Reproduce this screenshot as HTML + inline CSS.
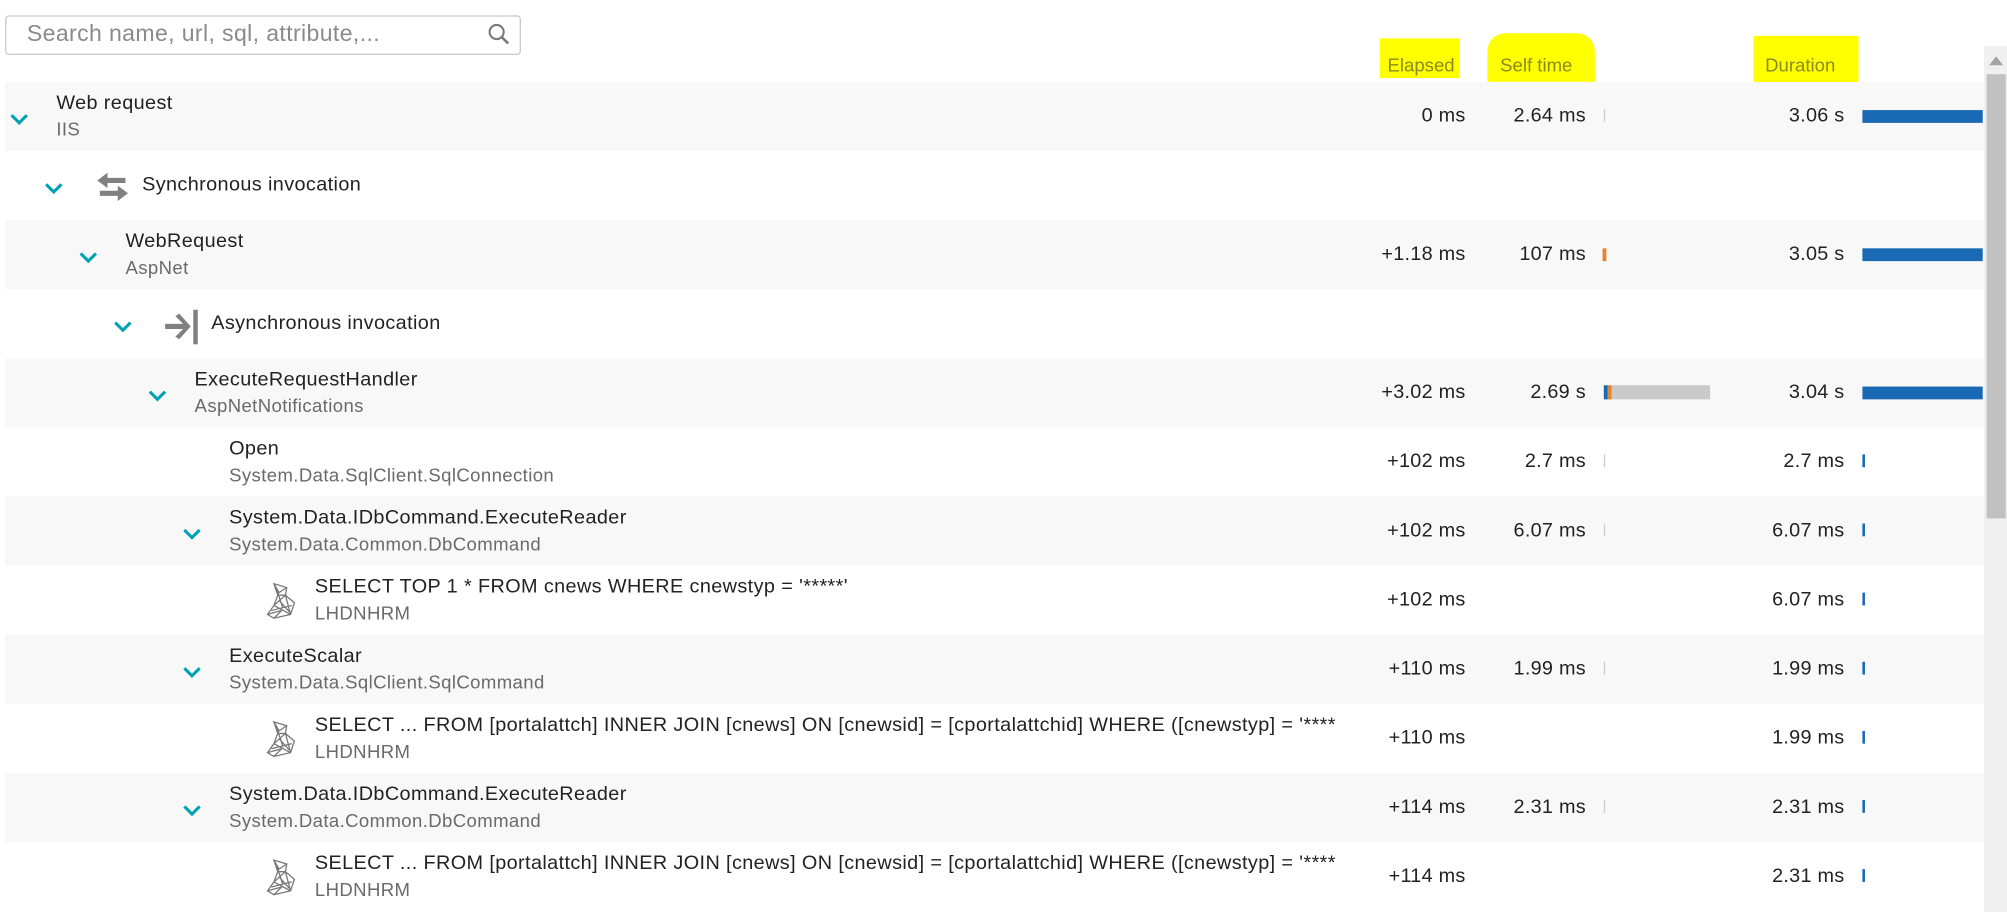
<!DOCTYPE html>
<html><head><meta charset="utf-8"><style>
html,body{margin:0;padding:0;background:#fff;overflow:hidden;}
body{width:2007px;height:912px;position:relative;font-family:"Liberation Sans",sans-serif;}
#w{position:absolute;left:0;top:0;width:1568px;height:713px;transform:scale(1.28);transform-origin:0 0;}
.a{position:absolute;white-space:nowrap;}
.row{position:absolute;left:4px;width:1546px;height:54px;}
.g{background:#f8f8f8;}
.t{position:absolute;white-space:nowrap;font-size:15.5px;color:#222;letter-spacing:0.3px;}
.s{position:absolute;white-space:nowrap;font-size:14.5px;color:#6a6a6a;letter-spacing:0.3px;}
.num{position:absolute;font-size:15.5px;color:#222;text-align:right;width:120px;letter-spacing:0.2px;}
.chev{position:absolute;width:16px;height:10px;}
.hl{position:absolute;background:#ffff00;}
.hd{position:absolute;font-size:14.5px;color:#8a8a20;}
</style></head><body><div id="w">
<div class="a" style="left:4px;top:12px;width:401px;height:29px;border:1px solid #c8c8c8;border-radius:3px;"></div>
<div class="a" style="left:21px;top:16px;font-size:18px;color:#8a8a8a;letter-spacing:0.3px">Search name, url, sql, attribute,...</div>
<svg class="a" style="left:380px;top:17px" width="20" height="20" viewBox="0 0 20 20"><circle cx="8" cy="8" r="5.5" fill="none" stroke="#777" stroke-width="1.6"/><line x1="12" y1="12" x2="17" y2="17" stroke="#777" stroke-width="2"/></svg>

<div class="hl" style="left:1078px;top:30px;width:62px;height:31px"></div>
<div class="hl" style="left:1162px;top:26px;width:84px;height:38px;border-radius:14px 14px 0 0"></div>
<div class="hl" style="left:1370px;top:28px;width:82px;height:42px"></div>
<div class="hd" style="left:1084px;top:44px">Elapsed</div>
<div class="hd" style="left:1172px;top:44px">Self time</div>
<div class="hd" style="left:1379px;top:44px">Duration</div>

<div class="a" style="left:1550px;top:36px;width:18px;height:677px;background:#f0f0f0"></div>
<div class="a" style="left:1552px;top:58px;width:15px;height:347px;background:#c1c1c1"></div>
<svg class="a" style="left:1552px;top:40px" width="15" height="14"><polygon points="2,11 7.5,4 13,11" fill="#a3a3a3"/></svg>

<div class="row g" style="top:64px"></div>
<div class="row g" style="top:172px"></div>
<div class="row g" style="top:280px"></div>
<div class="row g" style="top:388px"></div>
<div class="row g" style="top:496px"></div>
<div class="row g" style="top:604px"></div>

<svg width="0" height="0" style="position:absolute"><defs><symbol id="cv" viewBox="0 0 16 10"><polyline points="2,2 8,8 14,2" fill="none" stroke="#00a1b2" stroke-width="2.4"/></symbol>
<symbol id="db" viewBox="0 0 28 32"><g fill="none" stroke="#777" stroke-width="1"><path d="M8 3 L18 6 L17 12 L24 18 L21 27 L8 30 L3 27 L8 20 L11 12 Z"/><path d="M8 3 L12 10 L18 6 M11 12 L17 12 M8 20 L17 12 L21 27 M8 20 L21 27 M3 27 L14 24 L8 30 M10 7 L15 22 M6 24 L22 20 M12 16 L20 25"/></g></symbol></defs></svg>

<svg class="chev" style="left:7px;top:88px"><use href="#cv"/></svg>
<div class="t" style="left:44px;top:72px">Web request</div><div class="s" style="left:44px;top:94px">IIS</div>
<div class="num" style="left:1025px;top:82px">0 ms</div>
<div class="num" style="left:1119px;top:82px">2.64 ms</div>
<div class="a" style="left:1253px;top:85px;width:1px;height:10px;background:#ccc"></div>
<div class="num" style="left:1321px;top:82px">3.06 s</div>
<div class="a" style="left:1455px;top:86px;width:94px;height:10px;background:#1a69b5"></div>

<svg class="chev" style="left:34px;top:142px"><use href="#cv"/></svg>
<svg class="a" style="left:74px;top:134px" width="28" height="24" viewBox="0 0 28 24"><path d="M2 7 L10 1 L10 5 L24 5 L24 9 L10 9 L10 13 Z" fill="#808080"/><path d="M26 17 L18 11 L18 15 L4 15 L4 19 L18 19 L18 23 Z" fill="#808080"/></svg>
<div class="t" style="left:111px;top:136px">Synchronous invocation</div>

<svg class="chev" style="left:61px;top:196px"><use href="#cv"/></svg>
<div class="t" style="left:98px;top:180px">WebRequest</div><div class="s" style="left:98px;top:202px">AspNet</div>
<div class="num" style="left:1025px;top:190px">+1.18 ms</div>
<div class="num" style="left:1119px;top:190px">107 ms</div>
<div class="a" style="left:1252px;top:194px;width:3px;height:10px;background:#e6832e"></div>
<div class="num" style="left:1321px;top:190px">3.05 s</div>
<div class="a" style="left:1455px;top:194px;width:94px;height:10px;background:#1a69b5"></div>

<svg class="chev" style="left:88px;top:250px"><use href="#cv"/></svg>
<svg class="a" style="left:127px;top:240px" width="30" height="30" viewBox="0 0 30 30"><path d="M2 13 L16 13 L10 7 L13 5 L22 15 L13 25 L10 23 L16 17 L2 17 Z" fill="#808080"/><rect x="24" y="2" width="3.5" height="27" fill="#808080"/></svg>
<div class="t" style="left:165px;top:244px">Asynchronous invocation</div>

<svg class="chev" style="left:115px;top:304px"><use href="#cv"/></svg>
<div class="t" style="left:152px;top:288px">ExecuteRequestHandler</div><div class="s" style="left:152px;top:310px">AspNetNotifications</div>
<div class="num" style="left:1025px;top:298px">+3.02 ms</div>
<div class="num" style="left:1119px;top:298px">2.69 s</div>
<div class="a" style="left:1253px;top:301px;width:83px;height:11px;background:#cacaca"></div>
<div class="a" style="left:1253px;top:301px;width:3px;height:11px;background:#1a69b5"></div>
<div class="a" style="left:1256px;top:301px;width:3px;height:11px;background:#e6832e"></div>
<div class="num" style="left:1321px;top:298px">3.04 s</div>
<div class="a" style="left:1455px;top:302px;width:94px;height:10px;background:#1a69b5"></div>

<div class="t" style="left:179px;top:342px">Open</div><div class="s" style="left:179px;top:364px">System.Data.SqlClient.SqlConnection</div>
<div class="num" style="left:1025px;top:352px">+102 ms</div>
<div class="num" style="left:1119px;top:352px">2.7 ms</div>
<div class="a" style="left:1253px;top:355px;width:1px;height:10px;background:#ccc"></div>
<div class="num" style="left:1321px;top:352px">2.7 ms</div>
<div class="a" style="left:1455px;top:355px;width:2px;height:10px;background:#1a69b5"></div>

<svg class="chev" style="left:142px;top:412px"><use href="#cv"/></svg>
<div class="t" style="left:179px;top:396px">System.Data.IDbCommand.ExecuteReader</div><div class="s" style="left:179px;top:418px">System.Data.Common.DbCommand</div>
<div class="num" style="left:1025px;top:406px">+102 ms</div>
<div class="num" style="left:1119px;top:406px">6.07 ms</div>
<div class="a" style="left:1253px;top:409px;width:1px;height:10px;background:#ccc"></div>
<div class="num" style="left:1321px;top:406px">6.07 ms</div>
<div class="a" style="left:1455px;top:409px;width:2px;height:10px;background:#1a69b5"></div>

<svg class="a" style="left:206px;top:453px" width="28" height="32"><use href="#db"/></svg>
<div class="t" style="left:246px;top:450px">SELECT TOP 1 * FROM cnews WHERE cnewstyp = '*****'</div><div class="s" style="left:246px;top:472px">LHDNHRM</div>
<div class="num" style="left:1025px;top:460px">+102 ms</div>
<div class="num" style="left:1321px;top:460px">6.07 ms</div>
<div class="a" style="left:1455px;top:463px;width:2px;height:10px;background:#1a69b5"></div>

<svg class="chev" style="left:142px;top:520px"><use href="#cv"/></svg>
<div class="t" style="left:179px;top:504px">ExecuteScalar</div><div class="s" style="left:179px;top:526px">System.Data.SqlClient.SqlCommand</div>
<div class="num" style="left:1025px;top:514px">+110 ms</div>
<div class="num" style="left:1119px;top:514px">1.99 ms</div>
<div class="a" style="left:1253px;top:517px;width:1px;height:10px;background:#ccc"></div>
<div class="num" style="left:1321px;top:514px">1.99 ms</div>
<div class="a" style="left:1455px;top:517px;width:2px;height:10px;background:#1a69b5"></div>

<svg class="a" style="left:206px;top:561px" width="28" height="32"><use href="#db"/></svg>
<div class="t" style="left:246px;top:558px">SELECT ... FROM [portalattch] INNER JOIN [cnews] ON [cnewsid] = [cportalattchid] WHERE ([cnewstyp] = '****</div><div class="s" style="left:246px;top:580px">LHDNHRM</div>
<div class="num" style="left:1025px;top:568px">+110 ms</div>
<div class="num" style="left:1321px;top:568px">1.99 ms</div>
<div class="a" style="left:1455px;top:571px;width:2px;height:10px;background:#1a69b5"></div>

<svg class="chev" style="left:142px;top:628px"><use href="#cv"/></svg>
<div class="t" style="left:179px;top:612px">System.Data.IDbCommand.ExecuteReader</div><div class="s" style="left:179px;top:634px">System.Data.Common.DbCommand</div>
<div class="num" style="left:1025px;top:622px">+114 ms</div>
<div class="num" style="left:1119px;top:622px">2.31 ms</div>
<div class="a" style="left:1253px;top:625px;width:1px;height:10px;background:#ccc"></div>
<div class="num" style="left:1321px;top:622px">2.31 ms</div>
<div class="a" style="left:1455px;top:625px;width:2px;height:10px;background:#1a69b5"></div>

<svg class="a" style="left:206px;top:669px" width="28" height="32"><use href="#db"/></svg>
<div class="t" style="left:246px;top:666px">SELECT ... FROM [portalattch] INNER JOIN [cnews] ON [cnewsid] = [cportalattchid] WHERE ([cnewstyp] = '****</div><div class="s" style="left:246px;top:688px">LHDNHRM</div>
<div class="num" style="left:1025px;top:676px">+114 ms</div>
<div class="num" style="left:1321px;top:676px">2.31 ms</div>
<div class="a" style="left:1455px;top:679px;width:2px;height:10px;background:#1a69b5"></div>
</div></body></html>
